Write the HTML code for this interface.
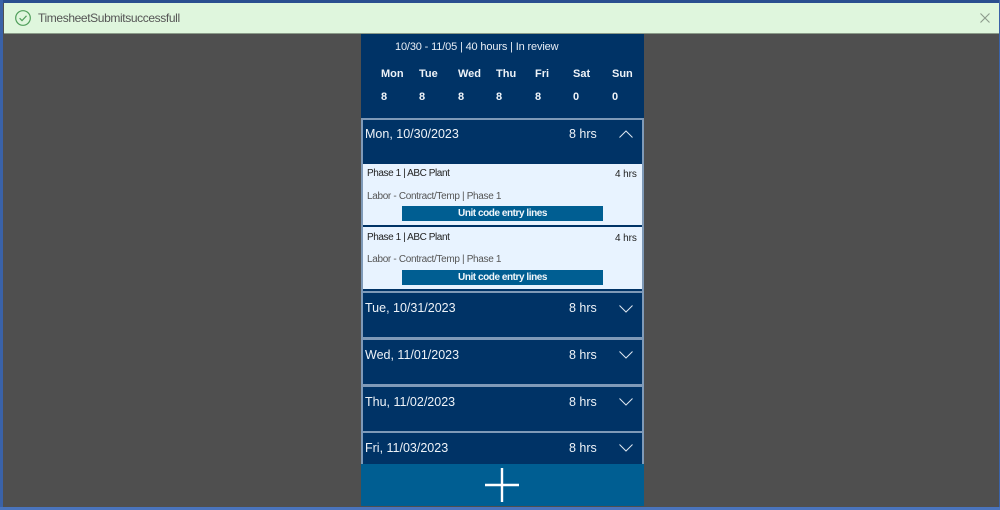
<!DOCTYPE html>
<html><head><meta charset="utf-8"><style>
html,body{margin:0;padding:0;width:1000px;height:510px;overflow:hidden;background:#4f4f4f;font-family:"Liberation Sans",sans-serif}
.a{position:absolute;white-space:nowrap}
#w{position:absolute;left:0;top:0;width:1000px;height:510px;filter:blur(.3px)}
</style></head><body><div id="w">
<div class="a" style="left:0;top:0;width:1000px;height:510px;background:#4f4f4f"></div>
<div class="a" style="left:0;top:0;width:1000px;height:3px;background:#2a4f8f"></div>
<div class="a" style="left:0;top:0;width:3px;height:510px;background:#3a62a8"></div>
<div class="a" style="left:999px;top:0;width:1px;height:510px;background:#3a62a8"></div>
<div class="a" style="left:0;top:507px;width:1000px;height:3px;background:#4a74bd"></div>
<div class="a" style="left:4px;top:3px;width:995px;height:30px;background:#dff6dd"></div>
<div class="a" style="left:4px;top:33px;width:995px;height:1px;background:#8a9a88"></div>
<svg class="a" style="left:14px;top:9px" width="18" height="18" viewBox="0 0 18 18" fill="none"><circle cx="9" cy="9" r="7.3" stroke="#4f9e5a" stroke-width="1.2"/><path d="M5.6 9.2l2.4 2.4 4.5-4.8" stroke="#4f9e5a" stroke-width="1.2"/></svg>
<div class="a" style="left:38px;top:11px;font-size:12px;line-height:15px;color:#555;letter-spacing:-.38px">TimesheetSubmitsuccessfull</div>
<svg class="a" style="left:980px;top:13px" width="10" height="10" viewBox="0 0 10 10" fill="none"><path d="M.5.5l9 9M9.5.5l-9 9" stroke="#8c9a8c" stroke-width="1.1"/></svg>

<div class="a" style="left:361px;top:34px;width:283px;height:430px;background:#003366"></div>
<div class="a" style="left:395px;top:40px;font-size:11px;line-height:14px;color:#e8eef5;letter-spacing:-.15px">10/30 - 11/05 | 40 hours | In review</div>
<div class="a" style="left:381px;top:67px;font-size:11px;line-height:14px;font-weight:bold;color:#eef3f8">Mon</div>
<div class="a" style="left:419px;top:67px;font-size:11px;line-height:14px;font-weight:bold;color:#eef3f8">Tue</div>
<div class="a" style="left:458px;top:67px;font-size:11px;line-height:14px;font-weight:bold;color:#eef3f8">Wed</div>
<div class="a" style="left:496px;top:67px;font-size:11px;line-height:14px;font-weight:bold;color:#eef3f8">Thu</div>
<div class="a" style="left:535px;top:67px;font-size:11px;line-height:14px;font-weight:bold;color:#eef3f8">Fri</div>
<div class="a" style="left:573px;top:67px;font-size:11px;line-height:14px;font-weight:bold;color:#eef3f8">Sat</div>
<div class="a" style="left:612px;top:67px;font-size:11px;line-height:14px;font-weight:bold;color:#eef3f8">Sun</div>
<div class="a" style="left:381px;top:90px;font-size:11px;line-height:14px;font-weight:bold;color:#eef3f8">8</div>
<div class="a" style="left:419px;top:90px;font-size:11px;line-height:14px;font-weight:bold;color:#eef3f8">8</div>
<div class="a" style="left:458px;top:90px;font-size:11px;line-height:14px;font-weight:bold;color:#eef3f8">8</div>
<div class="a" style="left:496px;top:90px;font-size:11px;line-height:14px;font-weight:bold;color:#eef3f8">8</div>
<div class="a" style="left:535px;top:90px;font-size:11px;line-height:14px;font-weight:bold;color:#eef3f8">8</div>
<div class="a" style="left:573px;top:90px;font-size:11px;line-height:14px;font-weight:bold;color:#eef3f8">0</div>
<div class="a" style="left:612px;top:90px;font-size:11px;line-height:14px;font-weight:bold;color:#eef3f8">0</div>

<div class="a" style="left:361px;top:118px;width:283px;height:346px;background:#7f9ab8"></div>
<div class="a" style="left:363px;top:120px;width:279px;height:171px;background:#003366"></div>

<div class="a" style="left:363px;top:164px;width:279px;height:61px;background:#e8f3ff"></div>
<div class="a" style="left:367px;top:167px;font-size:10px;line-height:13px;color:#222;letter-spacing:-.42px">Phase 1 | ABC Plant</div>
<div class="a" style="left:615px;top:168px;font-size:10px;line-height:13px;color:#222;letter-spacing:-.1px">4 hrs</div>
<div class="a" style="left:367px;top:190px;font-size:10px;line-height:13px;color:#555;letter-spacing:-.33px">Labor - Contract/Temp | Phase 1</div>
<div class="a" style="left:402px;top:206px;width:201px;height:15px;background:#005e92;color:#f2f7fb;font-size:10px;font-weight:bold;line-height:16px;text-align:center;letter-spacing:-.45px">Unit code entry lines</div>

<div class="a" style="left:363px;top:227px;width:279px;height:62px;background:#e8f3ff"></div>
<div class="a" style="left:367px;top:231px;font-size:10px;line-height:13px;color:#222;letter-spacing:-.42px">Phase 1 | ABC Plant</div>
<div class="a" style="left:615px;top:232px;font-size:10px;line-height:13px;color:#222;letter-spacing:-.1px">4 hrs</div>
<div class="a" style="left:367px;top:253px;font-size:10px;line-height:13px;color:#555;letter-spacing:-.33px">Labor - Contract/Temp | Phase 1</div>
<div class="a" style="left:402px;top:270px;width:201px;height:15px;background:#005e92;color:#f2f7fb;font-size:10px;font-weight:bold;line-height:16px;text-align:center;letter-spacing:-.45px">Unit code entry lines</div>

<div class="a" style="left:363px;top:293px;width:279px;height:44px;background:#003366"></div>
<div class="a" style="left:363px;top:340px;width:279px;height:44px;background:#003366"></div>
<div class="a" style="left:363px;top:387px;width:279px;height:44px;background:#003366"></div>
<div class="a" style="left:363px;top:433px;width:279px;height:31px;background:#003366"></div>

<div class="a" style="left:365px;top:127px;font-size:12.5px;line-height:15px;color:#eef3f8">Mon, 10/30/2023</div>
<div class="a" style="left:569px;top:127px;font-size:12.5px;line-height:15px;color:#eef3f8">8 hrs</div>
<svg class="a" style="left:618px;top:129px" width="16" height="10" viewBox="0 0 16 10" fill="none"><path d="M1.5 8.5L8 2l6.5 6.5" stroke="#dfe7f0" stroke-width="1"/></svg>

<div class="a" style="left:365px;top:301px;font-size:12.5px;line-height:15px;color:#eef3f8">Tue, 10/31/2023</div>
<div class="a" style="left:569px;top:301px;font-size:12.5px;line-height:15px;color:#eef3f8">8 hrs</div>
<svg class="a" style="left:618px;top:304px" width="16" height="10" viewBox="0 0 16 10" fill="none"><path d="M1.5 1.5L8 8l6.5-6.5" stroke="#dfe7f0" stroke-width="1"/></svg>

<div class="a" style="left:365px;top:348px;font-size:12.5px;line-height:15px;color:#eef3f8">Wed, 11/01/2023</div>
<div class="a" style="left:569px;top:348px;font-size:12.5px;line-height:15px;color:#eef3f8">8 hrs</div>
<svg class="a" style="left:618px;top:350px" width="16" height="10" viewBox="0 0 16 10" fill="none"><path d="M1.5 1.5L8 8l6.5-6.5" stroke="#dfe7f0" stroke-width="1"/></svg>

<div class="a" style="left:365px;top:395px;font-size:12.5px;line-height:15px;color:#eef3f8">Thu, 11/02/2023</div>
<div class="a" style="left:569px;top:395px;font-size:12.5px;line-height:15px;color:#eef3f8">8 hrs</div>
<svg class="a" style="left:618px;top:397px" width="16" height="10" viewBox="0 0 16 10" fill="none"><path d="M1.5 1.5L8 8l6.5-6.5" stroke="#dfe7f0" stroke-width="1"/></svg>

<div class="a" style="left:365px;top:441px;font-size:12.5px;line-height:15px;color:#eef3f8">Fri, 11/03/2023</div>
<div class="a" style="left:569px;top:441px;font-size:12.5px;line-height:15px;color:#eef3f8">8 hrs</div>
<svg class="a" style="left:618px;top:443px" width="16" height="10" viewBox="0 0 16 10" fill="none"><path d="M1.5 1.5L8 8l6.5-6.5" stroke="#dfe7f0" stroke-width="1"/></svg>

<div class="a" style="left:361px;top:464px;width:283px;height:42px;background:#005e92"></div>
<svg class="a" style="left:484px;top:467px" width="36" height="36" viewBox="0 0 36 36" fill="none"><path d="M1 18h34M18 1v34" stroke="#fff" stroke-width="2.4"/></svg>
</div></body></html>
